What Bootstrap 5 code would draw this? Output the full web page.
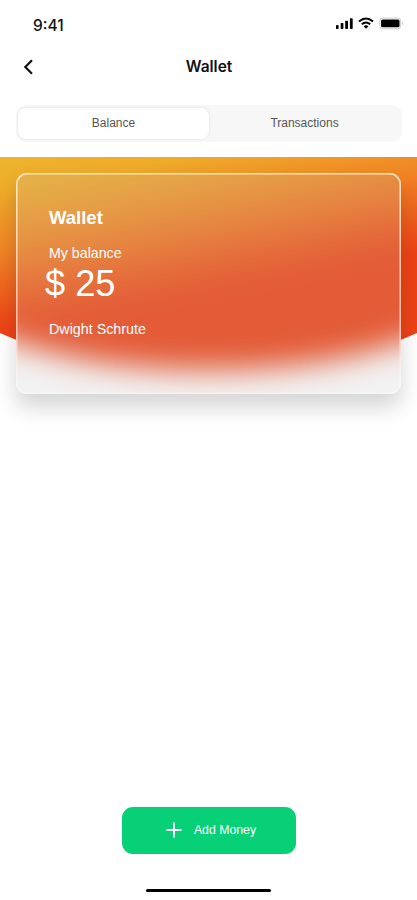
<!DOCTYPE html>
<html lang="en">
<head>
<meta charset="utf-8">
<meta name="viewport" content="width=device-width, initial-scale=1">
<title>Wallet</title>
<link href="https://cdn.jsdelivr.net/npm/bootstrap@5.3.0/dist/css/bootstrap.min.css" rel="stylesheet">
<style>
body{font-family:"Liberation Sans",Arial,sans-serif;color:#111;background:#fff;line-height:1.2}
.screen{height:900px;overflow:hidden}
.statusbar{height:48px;padding:2px 14px 0 33px}
.clock{font:500 15.5px Inter,sans-serif}
.titlebar{height:57px;padding:0 22px 19px 23px}
.titlebar h1{font:600 15.5px Inter,sans-serif;padding-bottom:2px}
.side{width:11px}
.segments{height:37px;margin:0 15px 15px 16px;padding:3px 2px;background:#f7f7f7;border-radius:10px}
.segments .nav-link{height:31px;padding:0;font-size:12px;color:#555;border-radius:8px}
.segments .nav-link.active{background:#fff;color:#555;box-shadow:0 0 3px rgba(0,0,0,.1)}
.hero{height:300px;padding:16px 16px 0}
.hero-bg{z-index:0}
.glass{z-index:1;height:221px;padding:35px 33px 0;color:#fff;border-radius:11px;box-shadow:0 13px 22px rgba(0,0,0,.17)}
.glass-fill{border-radius:11px}
.glass h2{font-size:18.5px;line-height:20px;margin:0 0 17px}
.label{font-size:14.2px;line-height:16px}
.amount{font-size:36.2px;line-height:40px;margin:3px 0 17px -4px}
.owner{font-size:14.3px;line-height:16px}
.add-btn{width:174px;height:47px;border-radius:11px;background:#08d077;color:#fff;font-size:12.3px;gap:12px;padding:0 0 0 5px;border:0}
.add-btn:hover{background:#07bd6c;color:#fff}
.home{width:125px;height:3.5px;margin:35px 0 8px;background:#000;border-radius:2px}
</style>
</head>
<body>
<main class="screen d-flex flex-column">
  <div class="statusbar d-flex align-items-center justify-content-between">
    <span class="clock">9:41</span>
    <svg width="68" height="14" viewBox="0 0 68 14" class="mb-1">
      <g fill="#000"><rect x="1" y="9" width="2.6" height="4" rx=".7"/><rect x="5.7" y="7" width="2.7" height="6" rx=".7"/><rect x="10.2" y="4.8" width="2.8" height="8.2" rx=".7"/><rect x="14.9" y="2.3" width="2.8" height="10.7" rx=".7"/></g>
      <g fill="none" stroke="#000" stroke-width="1.9"><path d="M24 5.5Q31 -.7 38 5.5"/><path d="M26.8 8.2Q31 4.6 35.2 8.2"/></g>
      <path d="M28.6 10.2Q31 8.4 33.4 10.2L31 12.8Z"/>
      <rect x="44.7" y="2" width="21" height="10.8" rx="3" fill="#fff" stroke="#ccc"/><rect x="46" y="3.5" width="18.5" height="7.8" rx="1.5"/><path d="M67 5.5v3.6q1.2-1.8 0-3.6" fill="#999"/>
    </svg>
  </div>
  <header class="titlebar d-flex align-items-center justify-content-between">
    <svg class="side" width="11" height="16" viewBox="0 0 11 16" fill="none" stroke="#111" stroke-width="2.2"><path d="M9 1.2 2.3 8 9 14.8"/></svg>
    <h1 class="m-0">Wallet</h1>
    <span class="side"></span>
  </header>
  <nav class="segments nav nav-pills nav-fill flex-nowrap">
    <a class="nav-link active w-50 d-flex align-items-center justify-content-center" href="#">Balance</a>
    <a class="nav-link w-50 d-flex align-items-center justify-content-center" href="#">Transactions</a>
  </nav>
  <section class="hero position-relative">
    <svg class="hero-bg position-absolute top-0 start-0" width="417" height="300" viewBox="0 0 417 300">
      <defs><linearGradient id="sunset" gradientUnits="userSpaceOnUse" x1="0" y1="0" x2="32" y2="170"><stop offset="0" stop-color="#edb52c"/><stop offset=".2" stop-color="#efab2a"/><stop offset=".55" stop-color="#f18225"/><stop offset=".95" stop-color="#ee4617"/><stop offset="1" stop-color="#ed4316"/></linearGradient></defs>
      <path d="M0 0H417V176C355 204 285 217 208 217S62 204 0 176Z" fill="url(#sunset)"/>
    </svg>
    <div class="glass position-relative">
      <svg class="glass-fill position-absolute top-0 start-0 w-100 h-100" viewBox="16 16 385 221" preserveAspectRatio="none">
        <defs>
          <filter id="frost" filterUnits="userSpaceOnUse" x="-60" y="-60" width="540" height="380" color-interpolation-filters="sRGB"><feGaussianBlur stdDeviation="15"/></filter>
          <linearGradient id="rim" gradientUnits="userSpaceOnUse" x1="0" y1="16" x2="0" y2="237"><stop offset="0" stop-color="#fff0cf" stop-opacity=".85"/><stop offset=".7" stop-color="#fff0e4" stop-opacity=".6"/><stop offset="1" stop-color="#fff" stop-opacity=".35"/></linearGradient>
        </defs>
        <rect width="417" height="300" fill="#fff"/>
        <path d="M-60 -60H477V155L417 180C355 203 285 213 208 213S62 203 0 180L-60 155Z" fill="url(#sunset)" filter="url(#frost)"/>
        <rect width="417" height="300" fill="#bebebe" fill-opacity=".2"/>
        <rect x="16.8" y="16.8" width="383.4" height="219.4" rx="10.3" fill="none" stroke="url(#rim)" stroke-width="1.6"/>
      </svg>
      <div class="position-relative">
        <h2 class="fw-bold">Wallet</h2>
        <div class="label">My balance</div>
        <div class="amount">$ 25</div>
        <div class="owner">Dwight Schrute</div>
      </div>
    </div>
  </section>
  <footer class="mt-auto d-flex flex-column align-items-center">
    <button class="add-btn btn d-flex align-items-center justify-content-center" type="button">
      <svg width="16" height="16" viewBox="0 0 16 16" stroke="#fff" stroke-width="1.9"><path d="M8 .5v15M.5 8h15"/></svg>
      <span>Add Money</span>
    </button>
    <div class="home"></div>
  </footer>
</main>
<script src="https://cdn.jsdelivr.net/npm/bootstrap@5.3.0/dist/js/bootstrap.bundle.min.js"></script>
</body>
</html>
